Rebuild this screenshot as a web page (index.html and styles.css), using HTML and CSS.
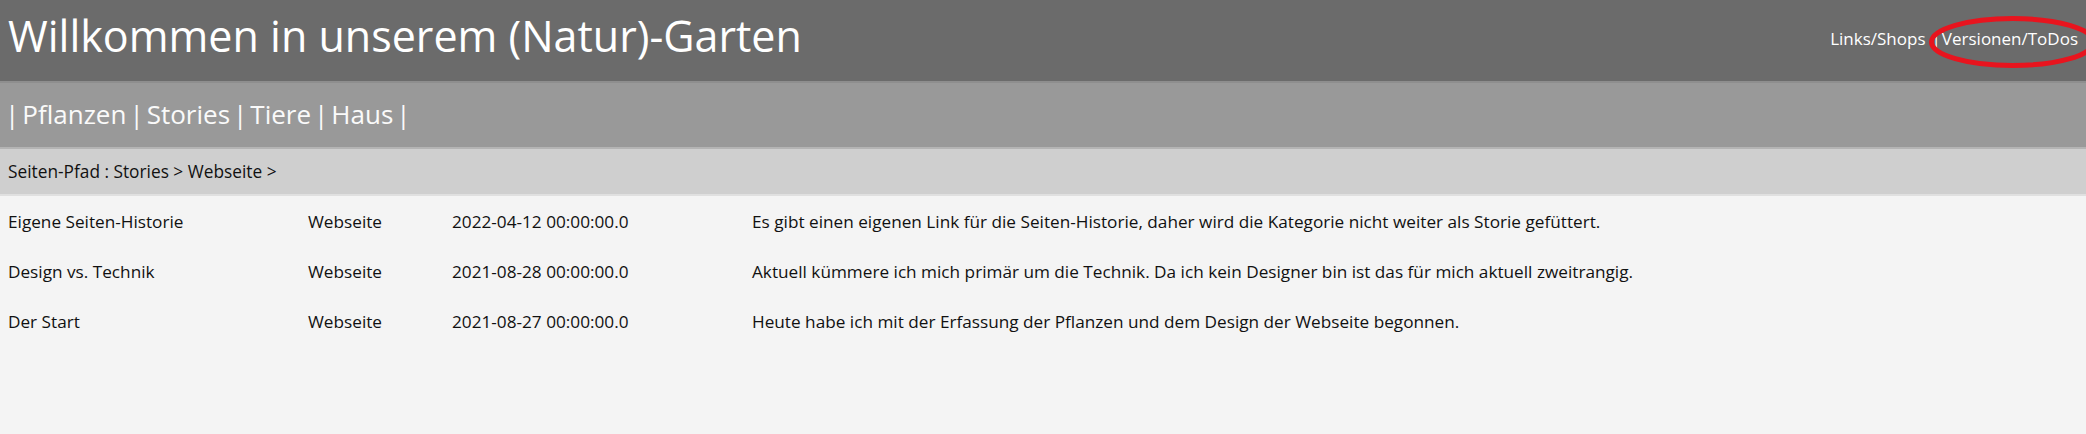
FILE: index.html
```html
<!DOCTYPE html>
<html lang="de">
<head>
<meta charset="utf-8">
<title>Willkommen in unserem (Natur)-Garten</title>
<link rel="stylesheet" href="styles.css">
</head>
<body>
<header class="top">
  <h1 class="title">Willkommen in unserem (Natur)-Garten</h1>
  <div class="toplinks">
    <a class="toplink" href="#">Links/Shops</a><span class="sep">|</span><a class="toplink marked" href="#">Versionen/ToDos<svg class="circle" viewBox="0 0 170 54" aria-hidden="true"><ellipse cx="85" cy="27" rx="81" ry="23.5" fill="none" stroke="#e8141e" stroke-width="5"/></svg></a>
  </div>
</header>
<nav class="menu"><span class="bar">|</span><a href="#">Pflanzen</a><span class="bar">|</span><a href="#">Stories</a><span class="bar">|</span><a href="#">Tiere</a><span class="bar">|</span><a href="#">Haus</a><span class="bar">|</span></nav>
<div class="crumbs">Seiten-Pfad : <a href="#">Stories</a> &gt; <a href="#">Webseite</a> &gt;</div>
<table class="stories">
  <tr><td class="c-title">Eigene Seiten-Historie</td><td class="c-cat">Webseite</td><td class="c-date">2022-04-12 00:00:00.0</td><td class="c-text">Es gibt einen eigenen Link für die Seiten-Historie, daher wird die Kategorie nicht weiter als Storie gefüttert.</td></tr>
  <tr><td class="c-title">Design vs. Technik</td><td class="c-cat">Webseite</td><td class="c-date">2021-08-28 00:00:00.0</td><td class="c-text">Aktuell kümmere ich mich primär um die Technik. Da ich kein Designer bin ist das für mich aktuell zweitrangig.</td></tr>
  <tr><td class="c-title">Der Start</td><td class="c-cat">Webseite</td><td class="c-date">2021-08-27 00:00:00.0</td><td class="c-text">Heute habe ich mit der Erfassung der Pflanzen und dem Design der Webseite begonnen.</td></tr>
</table>
</body>
</html>
```

FILE: styles.css
```css
* { box-sizing: border-box; }
html, body { margin: 0; padding: 0; }
body {
  background: #f4f4f4;
  font-family: "Open Sans", "Noto Sans", sans-serif;
  color: #111;
}
a { color: inherit; text-decoration: none; }

.top {
  display: flex;
  justify-content: space-between;
  align-items: flex-start;
  height: 83px;
  background: #6b6b6b;
  border-bottom: 2px solid #8e8e8e;
  padding: 0 8px;
}
.title {
  margin: 0;
  padding-top: 8px;
  font-weight: 400;
  font-size: 43px;
  line-height: 56px;
  color: #fff;
}
.toplinks {
  padding-top: 26px;
  font-size: 17px;
  line-height: 26px;
  color: #fff;
  white-space: nowrap;
}
.sep { margin: 0 1px 0 6px; }
.marked { position: relative; }
.circle {
  position: absolute;
  left: -17px;
  top: -12px;
  width: 175px;
  height: 54px;
  overflow: visible;
}

.menu {
  height: 66px;
  background: #999999;
  border-bottom: 2px solid #b4b4b4;
  padding: 13px 5px 0;
  font-size: 26px;
  line-height: 36px;
  color: #fafafa;
}
.bar { margin: 0 3px; }
.bar:first-child { margin-left: 0; }

.crumbs {
  height: 47px;
  background: #cfcfcf;
  border-bottom: 2px solid #e0e0e0;
  padding: 12px 8px 0;
  font-size: 17.3px;
  line-height: 22px;
  color: #111;
}

.stories {
  border-collapse: collapse;
  margin-top: 15px;
  font-size: 17.2px;
  color: #111;
}
.stories td {
  padding: 0;
  height: 50px;
  line-height: 22px;
  vertical-align: top;
  white-space: nowrap;
}
.c-title { width: 308px; padding-left: 8px !important; }
.c-cat { width: 144px; }
.c-date { width: 300px; }
```
